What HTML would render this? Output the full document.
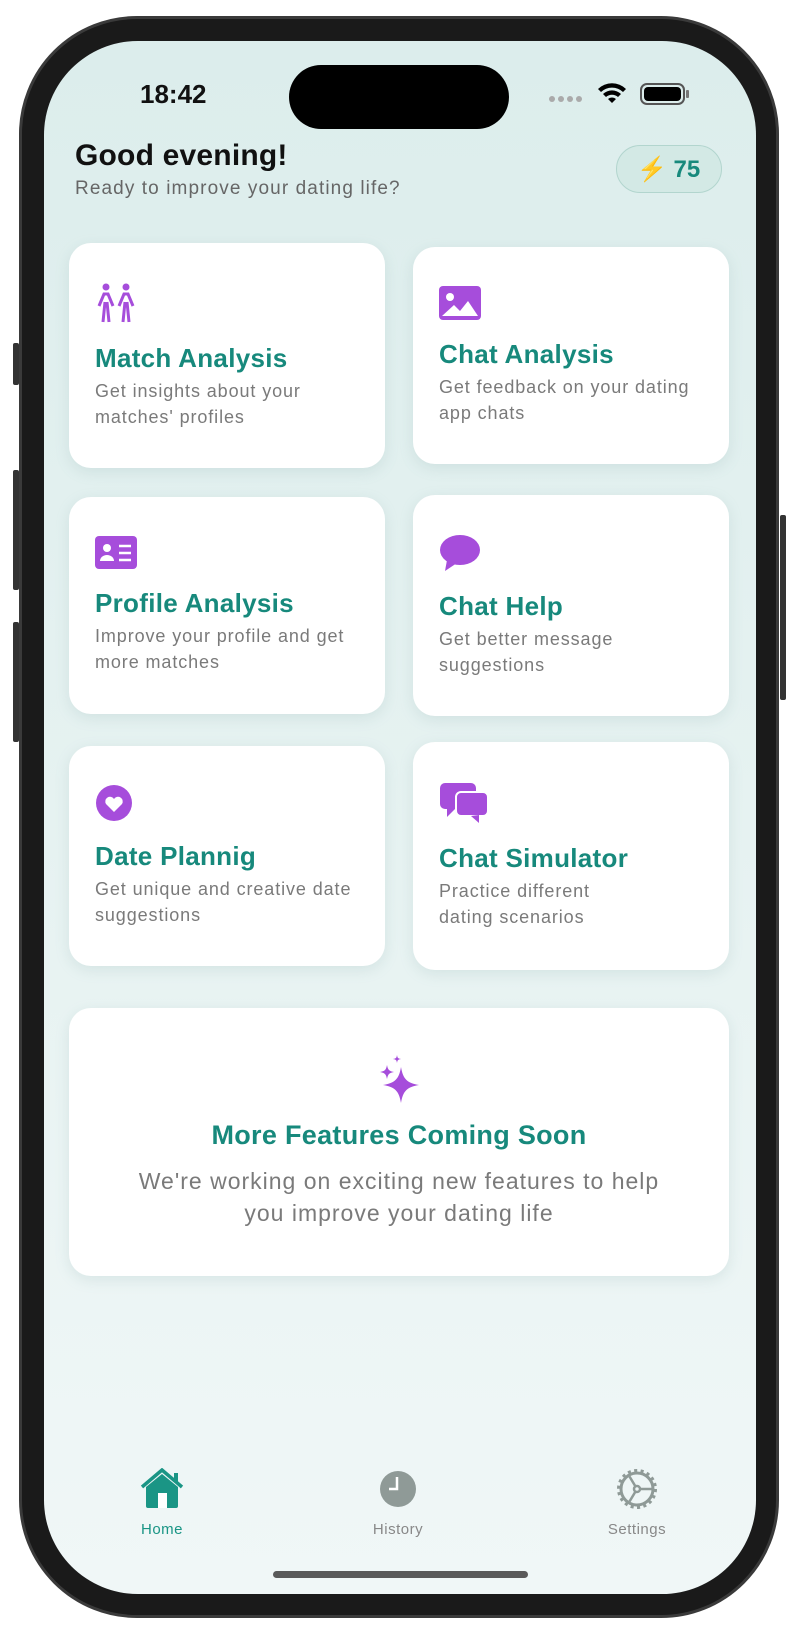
<!DOCTYPE html>
<html><head><meta charset="utf-8"><style>
*{margin:0;padding:0;box-sizing:border-box}
body{width:800px;height:1637px;background:#fff;position:relative;overflow:hidden;font-family:"Liberation Sans",sans-serif}
.frame{position:absolute;left:19px;top:16px;width:760px;height:1602px;border-radius:118px;background:#1a1a1a;border:3px solid #3a3a3a}
.screen{position:absolute;left:44px;top:41px;width:712px;height:1553px;border-radius:94px;background:linear-gradient(#dcedec,#e6f2f1 50%,#f0f7f7);overflow:hidden}
.btn{position:absolute;background:#333;width:6px;border-radius:2px}
.island{position:absolute;left:245px;top:24px;width:220px;height:64px;border-radius:32px;background:#000}
.time{position:absolute;left:96px;top:38px;font-size:26px;font-weight:bold;color:#111}
.card{position:absolute;background:#fff;border-radius:22px;box-shadow:0 4px 14px rgba(120,160,160,.18);padding-left:26px;display:flex;flex-direction:column;justify-content:center}
.card svg{display:block;margin-bottom:18px}
.t{font-size:26px;font-weight:bold;color:#17897c;line-height:32px;letter-spacing:0.3px}
.d{font-size:18px;color:#7a7a7a;line-height:26px;margin-top:4px;letter-spacing:0.9px}
.tab{position:absolute;top:1480px;font-size:15px;width:120px;text-align:center;color:#888;letter-spacing:0.5px}
</style></head><body>
<div class="btn" style="left:13px;top:343px;height:42px"></div>
<div class="btn" style="left:13px;top:470px;height:120px"></div>
<div class="btn" style="left:13px;top:622px;height:120px"></div>
<div class="btn" style="left:780px;top:515px;height:185px"></div>
<div class="frame"></div>
<div class="screen">
<div class="time">18:42</div>
<div class="island"></div>
<div style="position:absolute;left:505px;top:55px;display:flex;gap:3px"><i style="width:6px;height:6px;border-radius:3px;background:#aaa"></i><i style="width:6px;height:6px;border-radius:3px;background:#aaa"></i><i style="width:6px;height:6px;border-radius:3px;background:#aaa"></i><i style="width:6px;height:6px;border-radius:3px;background:#aaa"></i></div>
<svg style="position:absolute;left:552px;top:40px" width="32" height="24" viewBox="0 0 32 24"><path d="M2 8a20 20 0 0 1 28 0l-3 3a16 16 0 0 0-22 0z M7 13a13 13 0 0 1 18 0l-3 3a9 9 0 0 0-12 0z M12 18a6 6 0 0 1 8 0l-4 4z" fill="#000"/></svg>
<div style="position:absolute;left:596px;top:42px;width:45px;height:22px;border:2px solid #555;border-radius:7px;padding:2px"><div style="background:#000;height:100%;border-radius:4px"></div></div>
<div style="position:absolute;left:642px;top:49px;width:3px;height:8px;background:#777;border-radius:1px"></div>
<div style="position:absolute;left:31px;top:98px;font-size:30px;font-weight:bold;color:#111;letter-spacing:0.2px">Good evening!</div>
<div style="position:absolute;left:31px;top:137px;font-size:19px;color:#666;letter-spacing:1.1px">Ready to improve your dating life?</div>
<div style="position:absolute;left:572px;top:104px;width:106px;height:48px;border-radius:24px;background:#d3e9e5;border:1.5px solid #b2d5ce;font-size:24px;font-weight:bold;color:#17897c;padding:9px 0 0 20px"><span style="color:#f5b400;font-weight:normal">⚡</span> 75</div>

<div class="card" style="left:25px;top:202px;width:316px;height:225px">
<svg width="44" height="42" viewBox="0 0 44 42" fill="none" stroke="#a64ddb" stroke-width="3"><circle cx="11" cy="5" r="3.5" fill="#a64ddb" stroke="none"/><circle cx="31" cy="5" r="3.5" fill="#a64ddb" stroke="none"/><path d="M4 24l5-12h4l5 12M8 40l2-20M14 40l-2-20M24 24l5-12h4l5 12M28 40l2-20M34 40l-2-20"/></svg>
<div class="t">Match Analysis</div><div class="d">Get insights about your<br>matches' profiles</div></div>
<div class="card" style="left:369px;top:206px;width:316px;height:217px">
<svg width="42" height="34" viewBox="0 0 42 34"><rect x="0" y="0" width="42" height="34" rx="4" fill="#a64ddb"/><circle cx="11" cy="11" r="4" fill="#fff"/><path d="M3 30l12-11 6 6 8-10 10 15z" fill="#fff"/></svg>
<div class="t">Chat Analysis</div><div class="d">Get feedback on your dating<br>app chats</div></div>
<div class="card" style="left:25px;top:456px;width:316px;height:217px">
<svg width="42" height="33" viewBox="0 0 42 33"><rect width="42" height="33" rx="4" fill="#a64ddb"/><circle cx="12" cy="12" r="4" fill="#fff"/><path d="M5 25a7 6 0 0 1 14 0z" fill="#fff"/><path d="M24 10h12M24 17h12M24 24h12" stroke="#fff" stroke-width="2.5"/></svg>
<div class="t">Profile Analysis</div><div class="d">Improve your profile and get<br>more matches</div></div>
<div class="card" style="left:369px;top:454px;width:316px;height:221px">
<svg width="42" height="38" viewBox="0 0 42 38"><ellipse cx="21" cy="16" rx="20" ry="15" fill="#a64ddb"/><path d="M8 26l-2 11 12-8z" fill="#a64ddb"/></svg>
<div class="t">Chat Help</div><div class="d">Get better message<br>suggestions</div></div>
<div class="card" style="left:25px;top:705px;width:316px;height:220px">
<svg width="38" height="38" viewBox="0 0 38 38"><circle cx="19" cy="19" r="18" fill="#a64ddb"/><path d="M19 28l-8-8a4.5 4.5 0 0 1 8-5 4.5 4.5 0 0 1 8 5z" fill="#fff"/></svg>
<div class="t">Date Plannig</div><div class="d">Get unique and creative date<br>suggestions</div></div>
<div class="card" style="left:369px;top:701px;width:316px;height:228px">
<svg width="50" height="42" viewBox="0 0 50 42"><rect x="1" y="1" width="36" height="26" rx="5" fill="#a64ddb"/><path d="M8 26v9l8-8z" fill="#a64ddb"/><rect x="17" y="10" width="32" height="24" rx="5" fill="#a64ddb" stroke="#fff" stroke-width="2"/><path d="M40 33v8l-8-7z" fill="#a64ddb"/></svg>
<div class="t">Chat Simulator</div><div class="d">Practice different<br>dating scenarios</div></div>

<div class="card" style="left:25px;top:967px;width:660px;height:268px;padding:0;align-items:center;text-align:center">
<svg width="44" height="50" viewBox="0 0 44 50" style="margin-bottom:14px"><path d="M24 12c2 12 6 16 18 18-12 2-16 6-18 18-2-12-6-16-18-18 12-2 16-6 18-18z M10 10c1 5 2 6 7 7-5 1-6 2-7 7-1-5-2-6-7-7 5-1 6-2 7-7z M20 0c.5 3 1 3.5 4 4-3 .5-3.5 1-4 4-.5-3-1-3.5-4-4 3-.5 3.5-1 4-4z" fill="#a64ddb"/></svg>
<div style="font-size:27px;font-weight:bold;color:#17897c;line-height:32px;letter-spacing:0.3px">More Features Coming Soon</div>
<div style="font-size:23px;color:#7a7a7a;line-height:32px;margin-top:14px;letter-spacing:1px">We're working on exciting new features to help<br>you improve your dating life</div></div>

<svg style="position:absolute;left:96px;top:1427px" width="44" height="40" viewBox="0 0 44 40"><path d="M2 19L22 2l20 17" stroke="#1a9585" stroke-width="3.5" fill="none"/><rect x="34" y="5" width="4" height="9" fill="#1a9585"/><path d="M6 19L22 6l16 13v19a2 2 0 0 1-2 2H8a2 2 0 0 1-2-2z" fill="#1a9585"/><rect x="18" y="25" width="9" height="15" fill="#fff"/></svg>
<div class="tab" style="left:58px;color:#1a9585">Home</div>
<svg style="position:absolute;left:335px;top:1429px" width="38" height="38" viewBox="0 0 38 38"><circle cx="19" cy="19" r="18" fill="#8f9a97"/><path d="M18 7v12h-8" stroke="#fff" stroke-width="2.5" fill="none"/></svg>
<div class="tab" style="left:294px">History</div>
<svg style="position:absolute;left:572px;top:1427px" width="42" height="42" viewBox="0 0 42 42" fill="none" stroke="#8f9a97"><circle cx="21" cy="21" r="16" stroke-width="3"/><circle cx="21" cy="21" r="18" stroke-width="4" stroke-dasharray="3 3.3"/><circle cx="21" cy="21" r="3" stroke-width="2.5"/><path d="M24 21h12M19.5 18.5l-6-10M19.5 23.5l-6 10" stroke-width="2.5"/></svg>
<div class="tab" style="left:533px">Settings</div>
<div style="position:absolute;left:229px;top:1530px;width:255px;height:7px;border-radius:4px;background:#5a5a5a"></div>
</div>
</body></html>
